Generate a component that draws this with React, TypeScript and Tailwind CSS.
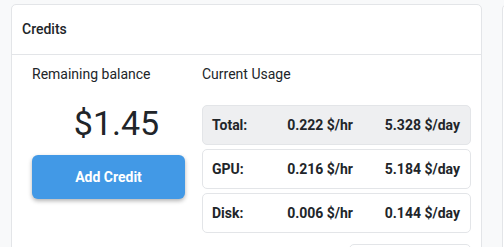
export default function App() {
  const rows = [
    { label: "Total:", hr: "0.222 $/hr", day: "5.328 $/day", total: true },
    { label: "GPU:", hr: "0.216 $/hr", day: "5.184 $/day" },
    { label: "Disk:", hr: "0.006 $/hr", day: "0.144 $/day" },
  ];

  return (
    <div
      className="h-[247px] w-[504px] overflow-hidden bg-[#f8f9fa] text-[#212529]"
      style={{ fontFamily: "Roboto, 'Liberation Sans', sans-serif" }}
    >
      <div className="flex gap-[20px] pl-[11px] pt-[4px]">
        <div className="w-[471px] shrink-0 rounded-[5px] border border-[#e3e5e8] bg-white">
          <div className="flex h-[50px] items-center border-b border-[#e3e5e8] px-[10px]">
            <span className="text-[14px] font-medium">Credits</span>
          </div>
          <div className="flex gap-[17px] pl-[20px] pr-[10px] pt-[9px]">
            <div className="flex w-[153px] shrink-0 flex-col">
              <div className="h-[20px] text-[14px] leading-[20px]">Remaining balance</div>
              <div className="mt-[19px] pl-[16px] text-center text-[34px] leading-[40px]">$1.45</div>
              <button className="mt-[12px] h-[44px] w-[153px] rounded-[6px] bg-[#4299e6] text-[14px] font-bold text-white shadow-[0_2px_4px_rgba(0,0,0,0.3)]">
                Add Credit
              </button>
            </div>
            <div className="flex flex-1 flex-col">
              <div className="h-[20px] text-[14px] leading-[20px]">Current Usage</div>
              <div className="mt-[21px] flex flex-col gap-[4px]">
                {rows.map((r) => (
                  <div
                    key={r.label}
                    className={`flex h-[40px] items-center rounded-[5px] border border-[#e3e5e8] pl-[9px] pr-[10px] text-[14px] font-bold ${
                      r.total ? "bg-[#eeeff1]" : "bg-white"
                    }`}
                  >
                    <div className="w-[61px]">{r.label}</div>
                    <div className="w-[80px] text-right">{r.hr}</div>
                    <div className="flex-1 text-right">{r.day}</div>
                  </div>
                ))}
              </div>
              <div className="mt-[11px] flex justify-end">
                <div className="h-[30px] w-[122px] rounded-[5px] border border-[#e3e5e8] bg-white" />
              </div>
            </div>
          </div>
        </div>
        <div className="h-[300px] w-[100px] shrink-0 rounded-[5px] border border-[#e3e5e8] bg-white" />
      </div>
    </div>
  );
}
